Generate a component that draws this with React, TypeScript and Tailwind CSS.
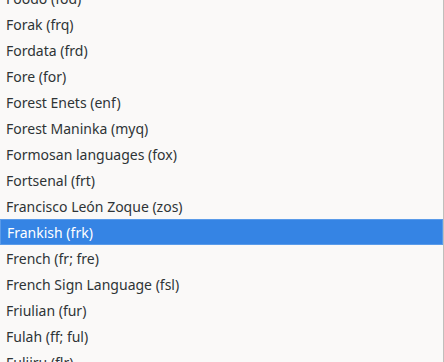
import React from "react";

const items = [
  "Foodo (fod)",
  "Forak (frq)",
  "Fordata (frd)",
  "Fore (for)",
  "Forest Enets (enf)",
  "Forest Maninka (myq)",
  "Formosan languages (fox)",
  "Fortsenal (frt)",
  "Francisco León Zoque (zos)",
  "Frankish (frk)",
  "French (fr; fre)",
  "French Sign Language (fsl)",
  "Friulian (fur)",
  "Fulah (ff; ful)",
  "Fuliiru (flr)",
];

export default function App() {
  return (
    <div
      className="w-[444px] h-[362px] overflow-hidden bg-[#faf9f8] border-r border-[#c0bfbc]"
      style={{ fontFamily: '"Noto Sans", "Open Sans", sans-serif' }}
    >
      <div className="-mt-[15px] flex flex-col">
        {items.map((t) => {
          const sel = t === "Frankish (frk)";
          return (
            <div
              key={t}
              className={
                sel
                  ? "h-[26px] flex items-center pl-[6px] text-[14px] text-white bg-[#3584e4] border border-[#5a9be9] pl-[5px]"
                  : "h-[26px] flex items-center pl-[6px] text-[14px] text-[#2e3436]"
              }
            >
              {t}
            </div>
          );
        })}
      </div>
    </div>
  );
}
